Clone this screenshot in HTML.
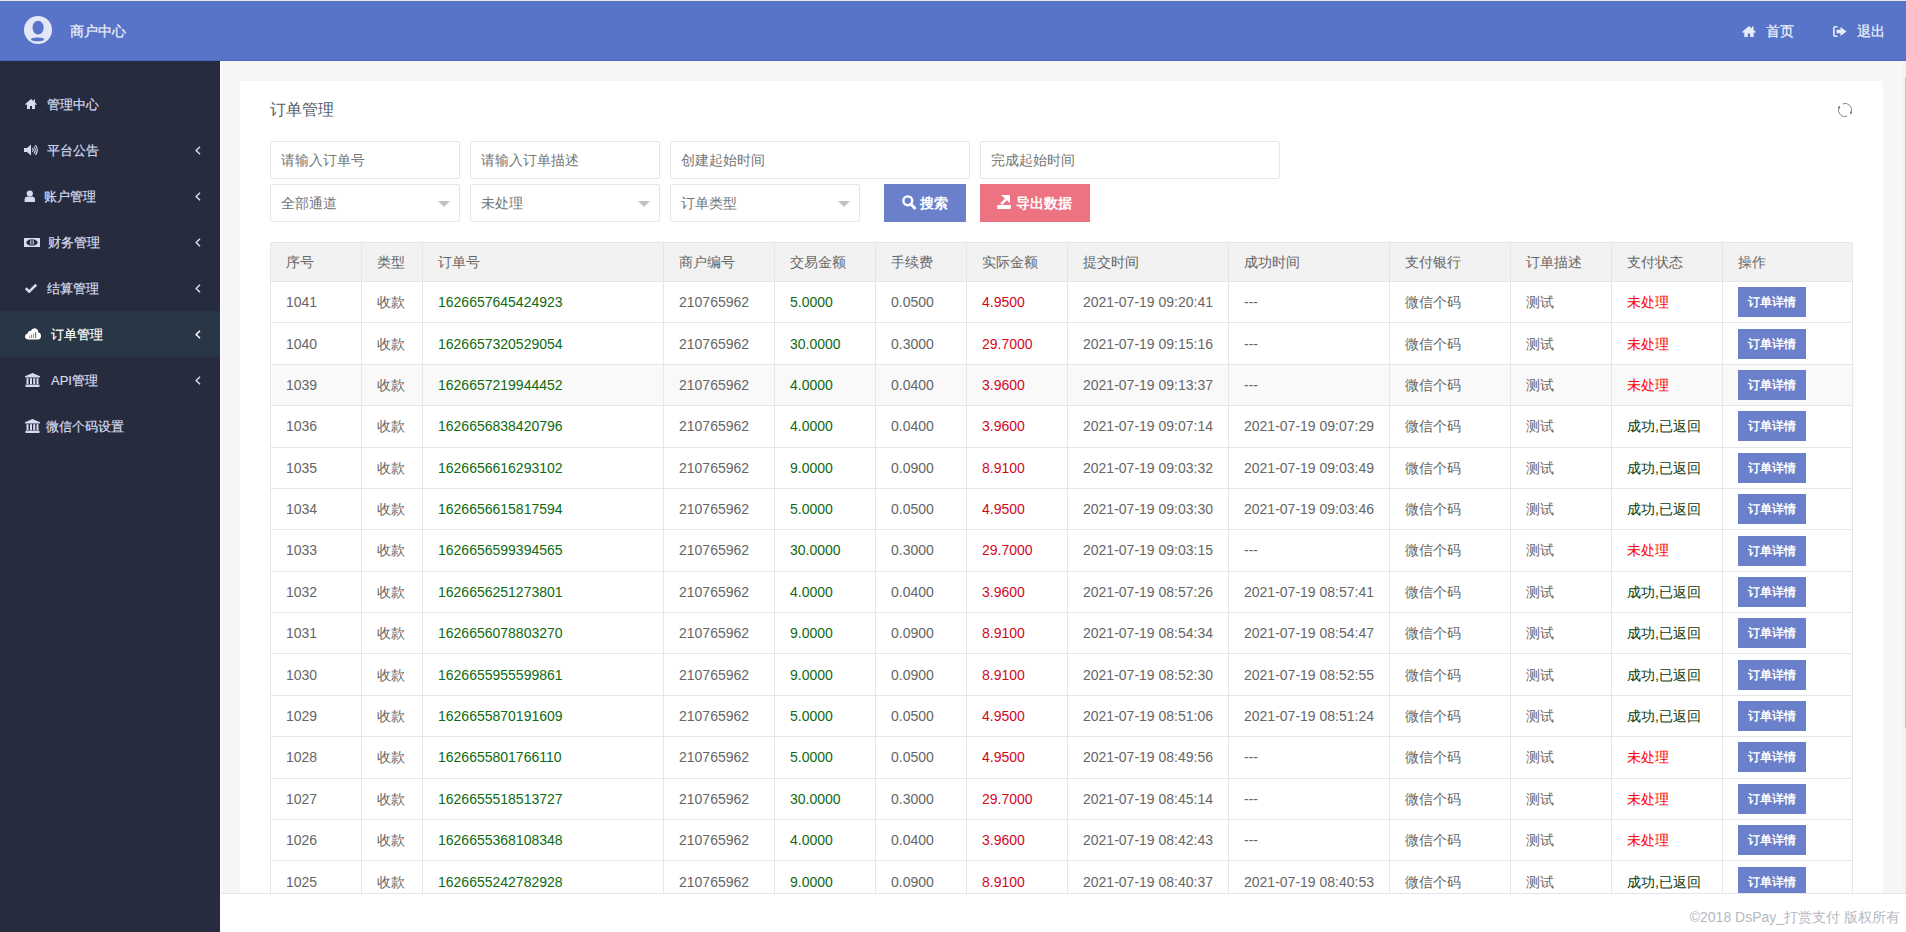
<!DOCTYPE html>
<html><head><meta charset="utf-8">
<style>
*{margin:0;padding:0;box-sizing:border-box}
html,body{width:1906px;height:932px;overflow:hidden;background:#f6f6f6;font-family:"Liberation Sans",sans-serif;font-size:14px;color:#666}
.abs{position:absolute}
#topline{position:absolute;left:0;top:0;width:1906px;height:1px;background:#e9e8e4}
#header{position:absolute;left:0;top:1px;width:1906px;height:60px;background:#5874c8;border-bottom:1px solid #4d68c0}
#side{position:absolute;left:0;top:61px;width:220px;height:871px;background:#262b3e}
#wline{position:absolute;left:220px;top:61px;width:1px;height:871px;background:#fff}
.nav{position:absolute;left:0;width:220px;height:46px;color:#d6dbf0;font-size:13px;-webkit-text-stroke:0.2px #d6dbf0}
.nav.act{background:#283646;color:#fff;-webkit-text-stroke:0.2px #fff}
.nav .t{position:absolute;top:1px;line-height:46px;white-space:nowrap}
.nav svg{position:absolute}
.nav .chev{position:absolute;left:195px;top:19px}
#panel{position:absolute;left:240px;top:81px;width:1643px;height:900px;background:#fff}
.inp{position:absolute;height:38px;border:1px solid #e6e6e6;border-radius:2px;background:#fff;color:#757575;font-size:14px;line-height:36px;padding-left:10px;white-space:nowrap}
.tri{position:absolute;right:9px;top:16px;width:0;height:0;border-left:6px solid transparent;border-right:6px solid transparent;border-top:6px solid #c2c2c2}
.hl{position:absolute;height:1px;background:#e6e6e6}
.vl{position:absolute;width:1px;background:#e6e6e6}
.th{position:absolute;color:#666;font-size:14px;white-space:nowrap}
.td{position:absolute;font-size:14px;white-space:nowrap;color:#666}
.td.gr{color:#0f6a12}
.td.rd{color:#d2081e}
.td.red{color:#ff0000}
.td.dk{color:#0e3a0e}
.btn{position:absolute;width:68px;height:30px;background:#6a80cb;color:#fff;font-size:12px;line-height:30px;text-align:center;font-weight:bold}
#footer{position:absolute;left:221px;top:893px;width:1685px;height:39px;background:#fff;border-top:1px solid #e2e6ea}
#footer .t{position:absolute;right:6px;top:4px;line-height:38px;color:#b4b8c4;font-size:14px}
#sbar{position:absolute;left:1903px;top:61px;width:3px;height:832px;background:#f1f1f1}
#thumb{position:absolute;left:1905px;top:78px;width:1px;height:650px;background:#c1c1c1}
</style></head><body>
<div id="topline"></div>
<div id="header">
  <svg class="abs" style="left:24px;top:15px" width="28" height="28" viewBox="0 0 28 28">
    <circle cx="14" cy="14" r="14" fill="#e4e7f6"/>
    <ellipse cx="14.1" cy="11.6" rx="5.6" ry="6.8" fill="#5874c8"/>
    <ellipse cx="13.6" cy="23.4" rx="6.6" ry="1.9" fill="#5874c8"/>
  </svg>
  <div class="abs" style="left:70px;top:0;line-height:60px;color:#eef0fa;font-size:14px;-webkit-text-stroke:0.25px #eef0fa">商户中心</div>
  <svg class="abs" style="left:1742px;top:25px" width="14" height="11" viewBox="0 0 14 11">
    <path d="M7 0 L0 6 L1.2 7 L2.3 6.1 L2.3 11 L5.8 11 L5.8 7.6 L8.2 7.6 L8.2 11 L11.7 11 L11.7 6.1 L12.8 7 L14 6 L11.5 3.9 L11.5 0.6 L9.9 0.6 L9.9 2.5 Z" fill="#e9ecf8"/>
  </svg>
  <div class="abs" style="left:1766px;top:0;line-height:60px;color:#eef0fa;font-size:14px;-webkit-text-stroke:0.25px #eef0fa">首页</div>
  <svg class="abs" style="left:1833px;top:25px" width="14" height="11" viewBox="0 0 14 11">
    <path d="M4.5 0.8 L2 0.8 Q0.8 0.8 0.8 2 L0.8 9 Q0.8 10.2 2 10.2 L4.5 10.2" stroke="#e9ecf8" stroke-width="1.6" fill="none"/>
    <path d="M3.5 3.8 L7.5 3.8 L7.5 1 L13.5 5.5 L7.5 10 L7.5 7.2 L3.5 7.2 Z" fill="#e9ecf8"/>
  </svg>
  <div class="abs" style="left:1857px;top:0;line-height:60px;color:#eef0fa;font-size:14px;-webkit-text-stroke:0.25px #eef0fa">退出</div>
</div>
<div id="side">
  <div class="nav" style="top:20px">
    <svg style="left:25px;top:18px" width="12" height="10" viewBox="0 0 12 10"><path d="M6 0 L0 5.2 L1 6 L2 5.2 L2 10 L5 10 L5 7 L7 7 L7 10 L10 10 L10 5.2 L11 6 L12 5.2 L10 3.4 L10 0.5 L8.6 0.5 L8.6 2.2 Z" fill="#d6dbf0"/></svg>
    <div class="t" style="left:47px">管理中心</div>
  </div>
  <div class="nav" style="top:66px">
    <svg style="left:24px;top:17px" width="14" height="12" viewBox="0 0 14 12"><path d="M0 4 L3 4 L7 0.5 L7 11.5 L3 8 L0 8 Z" fill="#d6dbf0"/><path d="M8.5 4 Q10 6 8.5 8" stroke="#d6dbf0" stroke-width="1.2" fill="none"/><path d="M10 2.5 Q12.5 6 10 9.5" stroke="#d6dbf0" stroke-width="1.2" fill="none"/><path d="M11.5 1 Q15 6 11.5 11" stroke="#d6dbf0" stroke-width="1.2" fill="none"/></svg>
    <div class="t" style="left:47px">平台公告</div>
    <svg class="chev" width="6" height="9" viewBox="0 0 6 9"><path d="M5 0.8 L1.2 4.5 L5 8.2" stroke="#d6dbf0" stroke-width="1.5" fill="none"/></svg>
  </div>
  <div class="nav" style="top:112px">
    <svg style="left:24px;top:17px" width="12" height="13" viewBox="0 0 12 13"><circle cx="5.8" cy="3.6" r="3.1" fill="#d6dbf0"/><path d="M0.6 12 L0.6 9.6 Q0.6 6.6 3.4 6.4 Q5.8 7.6 8.2 6.4 Q11 6.6 11 9.6 L11 12 Z" fill="#d6dbf0"/></svg>
    <div class="t" style="left:44px">账户管理</div>
    <svg class="chev" width="6" height="9" viewBox="0 0 6 9"><path d="M5 0.8 L1.2 4.5 L5 8.2" stroke="#d6dbf0" stroke-width="1.5" fill="none"/></svg>
  </div>
  <div class="nav" style="top:158px">
    <svg style="left:24px;top:19px" width="16" height="9" viewBox="0 0 16 9"><rect x="0" y="0" width="16" height="9" fill="#d6dbf0"/><ellipse cx="8" cy="4.5" rx="5.6" ry="3.2" fill="#262b3e"/><ellipse cx="8" cy="4.5" rx="2.2" ry="2.9" fill="#9aa0b8"/><rect x="7.5" y="2.2" width="1" height="4.6" fill="#262b3e"/></svg>
    <div class="t" style="left:48px">财务管理</div>
    <svg class="chev" width="6" height="9" viewBox="0 0 6 9"><path d="M5 0.8 L1.2 4.5 L5 8.2" stroke="#d6dbf0" stroke-width="1.5" fill="none"/></svg>
  </div>
  <div class="nav" style="top:204px">
    <svg style="left:25px;top:18px" width="12" height="10" viewBox="0 0 12 10"><path d="M0.8 5.2 L4.2 8.6 L11.2 1.6" stroke="#d6dbf0" stroke-width="2.6" fill="none"/></svg>
    <div class="t" style="left:47px">结算管理</div>
    <svg class="chev" width="6" height="9" viewBox="0 0 6 9"><path d="M5 0.8 L1.2 4.5 L5 8.2" stroke="#d6dbf0" stroke-width="1.5" fill="none"/></svg>
  </div>
  <div class="nav act" style="top:250px">
    <svg style="left:25px;top:17px" width="16" height="12" viewBox="0 0 16 12"><path d="M3.5 11.5 Q0 11.5 0 8.5 Q0 6 2.6 5.6 Q3 2.8 5.8 2.8 Q7 0 10 0.2 Q13.2 0.6 13.2 4.2 Q16 4.8 16 8 Q16 11.5 12.5 11.5 Z" fill="#fff"/><rect x="4" y="7.5" width="1.2" height="2.5" fill="#d9a441"/><rect x="6" y="6.5" width="1.2" height="3.5" fill="#6aa84f"/><rect x="8" y="5.5" width="1.2" height="4.5" fill="#d9a441"/><rect x="10" y="4" width="1.2" height="6" fill="#3d85c6"/></svg>
    <div class="t" style="left:51px">订单管理</div>
    <svg class="chev" width="6" height="9" viewBox="0 0 6 9"><path d="M5 0.8 L1.2 4.5 L5 8.2" stroke="#fff" stroke-width="1.5" fill="none"/></svg>
  </div>
  <div class="nav" style="top:296px">
    <svg style="left:25px;top:16px" width="15" height="14" viewBox="0 0 15 14"><path d="M7.5 0 L15 3.2 L15 4.4 L0 4.4 L0 3.2 Z" fill="#d6dbf0"/><rect x="1.5" y="5.2" width="2" height="6" fill="#d6dbf0"/><rect x="5" y="5.2" width="2" height="6" fill="#d6dbf0"/><rect x="8.2" y="5.2" width="2" height="6" fill="#d6dbf0"/><rect x="11.5" y="5.2" width="2" height="6" fill="#d6dbf0"/><rect x="0.5" y="11.6" width="14" height="2.4" fill="#d6dbf0"/></svg>
    <div class="t" style="left:51px">API管理</div>
    <svg class="chev" width="6" height="9" viewBox="0 0 6 9"><path d="M5 0.8 L1.2 4.5 L5 8.2" stroke="#d6dbf0" stroke-width="1.5" fill="none"/></svg>
  </div>
  <div class="nav" style="top:342px">
    <svg style="left:25px;top:16px" width="15" height="14" viewBox="0 0 15 14"><path d="M7.5 0 L15 3.2 L15 4.4 L0 4.4 L0 3.2 Z" fill="#d6dbf0"/><rect x="1.5" y="5.2" width="2" height="6" fill="#d6dbf0"/><rect x="5" y="5.2" width="2" height="6" fill="#d6dbf0"/><rect x="8.2" y="5.2" width="2" height="6" fill="#d6dbf0"/><rect x="11.5" y="5.2" width="2" height="6" fill="#d6dbf0"/><rect x="0.5" y="11.6" width="14" height="2.4" fill="#d6dbf0"/></svg>
    <div class="t" style="left:46px">微信个码设置</div>
  </div>
</div>
<div id="wline"></div>
<div id="panel"></div>
<div class="abs" style="left:270px;top:96px;line-height:28px;font-size:16px;color:#555a66">订单管理</div>
<svg class="abs" style="left:1837px;top:102px" width="16" height="16" viewBox="0 0 16 16">
  <path d="M5.74 1.8 A6.6 6.6 0 0 1 14.2 10.26" stroke="#7a7e86" stroke-width="0.95" fill="none"/>
  <path d="M10.26 14.2 A6.6 6.6 0 0 1 1.8 5.74" stroke="#7a7e86" stroke-width="0.95" fill="none"/>
  <path d="M15.2 10.2 L12.9 9.4 L13.6 12.4 Z" fill="#666"/>
  <path d="M0.8 5.8 L3.1 6.6 L2.4 3.6 Z" fill="#666"/>
</svg>
<div class="inp" style="left:270px;top:141px;width:190px">请输入订单号</div>
<div class="inp" style="left:470px;top:141px;width:190px">请输入订单描述</div>
<div class="inp" style="left:670px;top:141px;width:300px">创建起始时间</div>
<div class="inp" style="left:980px;top:141px;width:300px">完成起始时间</div>
<div class="inp" style="left:270px;top:184px;width:190px">全部通道<span class="tri"></span></div>
<div class="inp" style="left:470px;top:184px;width:190px">未处理<span class="tri"></span></div>
<div class="inp" style="left:670px;top:184px;width:190px">订单类型<span class="tri"></span></div>
<div class="abs" style="left:884px;top:184px;width:82px;height:38px;background:#6a80cb;color:#fff;font-size:14px;line-height:38px;font-weight:bold">
  <svg class="abs" style="left:18px;top:11px" width="14" height="15" viewBox="0 0 14 15"><circle cx="5.8" cy="5.8" r="4.4" stroke="#fff" stroke-width="2.4" fill="none"/><path d="M8.8 9 L12.6 13" stroke="#fff" stroke-width="3" stroke-linecap="round"/></svg>
  <span class="abs" style="left:36px;top:0">搜索</span>
</div>
<div class="abs" style="left:980px;top:184px;width:110px;height:38px;background:#ee7382;color:#fff;font-size:14px;line-height:38px;font-weight:bold">
  <svg class="abs" style="left:17px;top:11px" width="14" height="14" viewBox="0 0 14 14"><path d="M4 0 L13 0 L13 8 Z" fill="#fff"/><path d="M4.2 9.2 L9.2 4.2" stroke="#fff" stroke-width="2.6" fill="none"/><rect x="0.2" y="10" width="13.6" height="4" rx="0.6" fill="#fff"/></svg>
  <span class="abs" style="left:36px;top:0">导出数据</span>
</div>
<div class="abs" style="left:270px;top:242px;width:1582px;height:39px;background:#f2f2f2"></div>
<div class="abs" style="left:270px;top:364px;width:1582px;height:41px;background:#f9f9f9"></div>
<div class="hl" style="top:242px;left:270px;width:1583px"></div>
<div class="hl" style="top:281px;left:270px;width:1583px"></div>
<div class="hl" style="top:322px;left:270px;width:1583px"></div>
<div class="hl" style="top:364px;left:270px;width:1583px"></div>
<div class="hl" style="top:405px;left:270px;width:1583px"></div>
<div class="hl" style="top:447px;left:270px;width:1583px"></div>
<div class="hl" style="top:488px;left:270px;width:1583px"></div>
<div class="hl" style="top:529px;left:270px;width:1583px"></div>
<div class="hl" style="top:571px;left:270px;width:1583px"></div>
<div class="hl" style="top:612px;left:270px;width:1583px"></div>
<div class="hl" style="top:653px;left:270px;width:1583px"></div>
<div class="hl" style="top:695px;left:270px;width:1583px"></div>
<div class="hl" style="top:736px;left:270px;width:1583px"></div>
<div class="hl" style="top:778px;left:270px;width:1583px"></div>
<div class="hl" style="top:819px;left:270px;width:1583px"></div>
<div class="hl" style="top:860px;left:270px;width:1583px"></div>
<div class="hl" style="top:902px;left:270px;width:1583px"></div>
<div class="vl" style="left:270px;top:242px;height:661px"></div>
<div class="vl" style="left:361px;top:242px;height:661px"></div>
<div class="vl" style="left:422px;top:242px;height:661px"></div>
<div class="vl" style="left:663px;top:242px;height:661px"></div>
<div class="vl" style="left:774px;top:242px;height:661px"></div>
<div class="vl" style="left:875px;top:242px;height:661px"></div>
<div class="vl" style="left:966px;top:242px;height:661px"></div>
<div class="vl" style="left:1067px;top:242px;height:661px"></div>
<div class="vl" style="left:1228px;top:242px;height:661px"></div>
<div class="vl" style="left:1389px;top:242px;height:661px"></div>
<div class="vl" style="left:1510px;top:242px;height:661px"></div>
<div class="vl" style="left:1611px;top:242px;height:661px"></div>
<div class="vl" style="left:1722px;top:242px;height:661px"></div>
<div class="vl" style="left:1852px;top:242px;height:661px"></div>
<div class="th" style="left:286px;top:243px;height:38px;line-height:38px">序号</div>
<div class="th" style="left:377px;top:243px;height:38px;line-height:38px">类型</div>
<div class="th" style="left:438px;top:243px;height:38px;line-height:38px">订单号</div>
<div class="th" style="left:679px;top:243px;height:38px;line-height:38px">商户编号</div>
<div class="th" style="left:790px;top:243px;height:38px;line-height:38px">交易金额</div>
<div class="th" style="left:891px;top:243px;height:38px;line-height:38px">手续费</div>
<div class="th" style="left:982px;top:243px;height:38px;line-height:38px">实际金额</div>
<div class="th" style="left:1083px;top:243px;height:38px;line-height:38px">提交时间</div>
<div class="th" style="left:1244px;top:243px;height:38px;line-height:38px">成功时间</div>
<div class="th" style="left:1405px;top:243px;height:38px;line-height:38px">支付银行</div>
<div class="th" style="left:1526px;top:243px;height:38px;line-height:38px">订单描述</div>
<div class="th" style="left:1627px;top:243px;height:38px;line-height:38px">支付状态</div>
<div class="th" style="left:1738px;top:243px;height:38px;line-height:38px">操作</div>
<div class="td g" style="left:286px;top:282.20px;height:40px;line-height:40px">1041</div>
<div class="td g" style="left:377px;top:282.20px;height:40px;line-height:40px">收款</div>
<div class="td gr" style="left:438px;top:282.20px;height:40px;line-height:40px">1626657645424923</div>
<div class="td g" style="left:679px;top:282.20px;height:40px;line-height:40px">210765962</div>
<div class="td gr" style="left:790px;top:282.20px;height:40px;line-height:40px">5.0000</div>
<div class="td g" style="left:891px;top:282.20px;height:40px;line-height:40px">0.0500</div>
<div class="td rd" style="left:982px;top:282.20px;height:40px;line-height:40px">4.9500</div>
<div class="td g" style="left:1083px;top:282.20px;height:40px;line-height:40px">2021-07-19 09:20:41</div>
<div class="td g" style="left:1244px;top:282.20px;height:40px;line-height:40px">---</div>
<div class="td g" style="left:1405px;top:282.20px;height:40px;line-height:40px">微信个码</div>
<div class="td g" style="left:1526px;top:282.20px;height:40px;line-height:40px">测试</div>
<div class="td red" style="left:1627px;top:282.20px;height:40px;line-height:40px">未处理</div>
<div class="btn" style="left:1738px;top:287px">订单详情</div>
<div class="td g" style="left:286px;top:323.58px;height:40px;line-height:40px">1040</div>
<div class="td g" style="left:377px;top:323.58px;height:40px;line-height:40px">收款</div>
<div class="td gr" style="left:438px;top:323.58px;height:40px;line-height:40px">1626657320529054</div>
<div class="td g" style="left:679px;top:323.58px;height:40px;line-height:40px">210765962</div>
<div class="td gr" style="left:790px;top:323.58px;height:40px;line-height:40px">30.0000</div>
<div class="td g" style="left:891px;top:323.58px;height:40px;line-height:40px">0.3000</div>
<div class="td rd" style="left:982px;top:323.58px;height:40px;line-height:40px">29.7000</div>
<div class="td g" style="left:1083px;top:323.58px;height:40px;line-height:40px">2021-07-19 09:15:16</div>
<div class="td g" style="left:1244px;top:323.58px;height:40px;line-height:40px">---</div>
<div class="td g" style="left:1405px;top:323.58px;height:40px;line-height:40px">微信个码</div>
<div class="td g" style="left:1526px;top:323.58px;height:40px;line-height:40px">测试</div>
<div class="td red" style="left:1627px;top:323.58px;height:40px;line-height:40px">未处理</div>
<div class="btn" style="left:1738px;top:329px">订单详情</div>
<div class="td g" style="left:286px;top:364.96px;height:40px;line-height:40px">1039</div>
<div class="td g" style="left:377px;top:364.96px;height:40px;line-height:40px">收款</div>
<div class="td gr" style="left:438px;top:364.96px;height:40px;line-height:40px">1626657219944452</div>
<div class="td g" style="left:679px;top:364.96px;height:40px;line-height:40px">210765962</div>
<div class="td gr" style="left:790px;top:364.96px;height:40px;line-height:40px">4.0000</div>
<div class="td g" style="left:891px;top:364.96px;height:40px;line-height:40px">0.0400</div>
<div class="td rd" style="left:982px;top:364.96px;height:40px;line-height:40px">3.9600</div>
<div class="td g" style="left:1083px;top:364.96px;height:40px;line-height:40px">2021-07-19 09:13:37</div>
<div class="td g" style="left:1244px;top:364.96px;height:40px;line-height:40px">---</div>
<div class="td g" style="left:1405px;top:364.96px;height:40px;line-height:40px">微信个码</div>
<div class="td g" style="left:1526px;top:364.96px;height:40px;line-height:40px">测试</div>
<div class="td red" style="left:1627px;top:364.96px;height:40px;line-height:40px">未处理</div>
<div class="btn" style="left:1738px;top:370px">订单详情</div>
<div class="td g" style="left:286px;top:406.34px;height:40px;line-height:40px">1036</div>
<div class="td g" style="left:377px;top:406.34px;height:40px;line-height:40px">收款</div>
<div class="td gr" style="left:438px;top:406.34px;height:40px;line-height:40px">1626656838420796</div>
<div class="td g" style="left:679px;top:406.34px;height:40px;line-height:40px">210765962</div>
<div class="td gr" style="left:790px;top:406.34px;height:40px;line-height:40px">4.0000</div>
<div class="td g" style="left:891px;top:406.34px;height:40px;line-height:40px">0.0400</div>
<div class="td rd" style="left:982px;top:406.34px;height:40px;line-height:40px">3.9600</div>
<div class="td g" style="left:1083px;top:406.34px;height:40px;line-height:40px">2021-07-19 09:07:14</div>
<div class="td g" style="left:1244px;top:406.34px;height:40px;line-height:40px">2021-07-19 09:07:29</div>
<div class="td g" style="left:1405px;top:406.34px;height:40px;line-height:40px">微信个码</div>
<div class="td g" style="left:1526px;top:406.34px;height:40px;line-height:40px">测试</div>
<div class="td dk" style="left:1627px;top:406.34px;height:40px;line-height:40px">成功,已返回</div>
<div class="btn" style="left:1738px;top:411px">订单详情</div>
<div class="td g" style="left:286px;top:447.72px;height:40px;line-height:40px">1035</div>
<div class="td g" style="left:377px;top:447.72px;height:40px;line-height:40px">收款</div>
<div class="td gr" style="left:438px;top:447.72px;height:40px;line-height:40px">1626656616293102</div>
<div class="td g" style="left:679px;top:447.72px;height:40px;line-height:40px">210765962</div>
<div class="td gr" style="left:790px;top:447.72px;height:40px;line-height:40px">9.0000</div>
<div class="td g" style="left:891px;top:447.72px;height:40px;line-height:40px">0.0900</div>
<div class="td rd" style="left:982px;top:447.72px;height:40px;line-height:40px">8.9100</div>
<div class="td g" style="left:1083px;top:447.72px;height:40px;line-height:40px">2021-07-19 09:03:32</div>
<div class="td g" style="left:1244px;top:447.72px;height:40px;line-height:40px">2021-07-19 09:03:49</div>
<div class="td g" style="left:1405px;top:447.72px;height:40px;line-height:40px">微信个码</div>
<div class="td g" style="left:1526px;top:447.72px;height:40px;line-height:40px">测试</div>
<div class="td dk" style="left:1627px;top:447.72px;height:40px;line-height:40px">成功,已返回</div>
<div class="btn" style="left:1738px;top:453px">订单详情</div>
<div class="td g" style="left:286px;top:489.10px;height:40px;line-height:40px">1034</div>
<div class="td g" style="left:377px;top:489.10px;height:40px;line-height:40px">收款</div>
<div class="td gr" style="left:438px;top:489.10px;height:40px;line-height:40px">1626656615817594</div>
<div class="td g" style="left:679px;top:489.10px;height:40px;line-height:40px">210765962</div>
<div class="td gr" style="left:790px;top:489.10px;height:40px;line-height:40px">5.0000</div>
<div class="td g" style="left:891px;top:489.10px;height:40px;line-height:40px">0.0500</div>
<div class="td rd" style="left:982px;top:489.10px;height:40px;line-height:40px">4.9500</div>
<div class="td g" style="left:1083px;top:489.10px;height:40px;line-height:40px">2021-07-19 09:03:30</div>
<div class="td g" style="left:1244px;top:489.10px;height:40px;line-height:40px">2021-07-19 09:03:46</div>
<div class="td g" style="left:1405px;top:489.10px;height:40px;line-height:40px">微信个码</div>
<div class="td g" style="left:1526px;top:489.10px;height:40px;line-height:40px">测试</div>
<div class="td dk" style="left:1627px;top:489.10px;height:40px;line-height:40px">成功,已返回</div>
<div class="btn" style="left:1738px;top:494px">订单详情</div>
<div class="td g" style="left:286px;top:530.48px;height:40px;line-height:40px">1033</div>
<div class="td g" style="left:377px;top:530.48px;height:40px;line-height:40px">收款</div>
<div class="td gr" style="left:438px;top:530.48px;height:40px;line-height:40px">1626656599394565</div>
<div class="td g" style="left:679px;top:530.48px;height:40px;line-height:40px">210765962</div>
<div class="td gr" style="left:790px;top:530.48px;height:40px;line-height:40px">30.0000</div>
<div class="td g" style="left:891px;top:530.48px;height:40px;line-height:40px">0.3000</div>
<div class="td rd" style="left:982px;top:530.48px;height:40px;line-height:40px">29.7000</div>
<div class="td g" style="left:1083px;top:530.48px;height:40px;line-height:40px">2021-07-19 09:03:15</div>
<div class="td g" style="left:1244px;top:530.48px;height:40px;line-height:40px">---</div>
<div class="td g" style="left:1405px;top:530.48px;height:40px;line-height:40px">微信个码</div>
<div class="td g" style="left:1526px;top:530.48px;height:40px;line-height:40px">测试</div>
<div class="td red" style="left:1627px;top:530.48px;height:40px;line-height:40px">未处理</div>
<div class="btn" style="left:1738px;top:536px">订单详情</div>
<div class="td g" style="left:286px;top:571.86px;height:40px;line-height:40px">1032</div>
<div class="td g" style="left:377px;top:571.86px;height:40px;line-height:40px">收款</div>
<div class="td gr" style="left:438px;top:571.86px;height:40px;line-height:40px">1626656251273801</div>
<div class="td g" style="left:679px;top:571.86px;height:40px;line-height:40px">210765962</div>
<div class="td gr" style="left:790px;top:571.86px;height:40px;line-height:40px">4.0000</div>
<div class="td g" style="left:891px;top:571.86px;height:40px;line-height:40px">0.0400</div>
<div class="td rd" style="left:982px;top:571.86px;height:40px;line-height:40px">3.9600</div>
<div class="td g" style="left:1083px;top:571.86px;height:40px;line-height:40px">2021-07-19 08:57:26</div>
<div class="td g" style="left:1244px;top:571.86px;height:40px;line-height:40px">2021-07-19 08:57:41</div>
<div class="td g" style="left:1405px;top:571.86px;height:40px;line-height:40px">微信个码</div>
<div class="td g" style="left:1526px;top:571.86px;height:40px;line-height:40px">测试</div>
<div class="td dk" style="left:1627px;top:571.86px;height:40px;line-height:40px">成功,已返回</div>
<div class="btn" style="left:1738px;top:577px">订单详情</div>
<div class="td g" style="left:286px;top:613.24px;height:40px;line-height:40px">1031</div>
<div class="td g" style="left:377px;top:613.24px;height:40px;line-height:40px">收款</div>
<div class="td gr" style="left:438px;top:613.24px;height:40px;line-height:40px">1626656078803270</div>
<div class="td g" style="left:679px;top:613.24px;height:40px;line-height:40px">210765962</div>
<div class="td gr" style="left:790px;top:613.24px;height:40px;line-height:40px">9.0000</div>
<div class="td g" style="left:891px;top:613.24px;height:40px;line-height:40px">0.0900</div>
<div class="td rd" style="left:982px;top:613.24px;height:40px;line-height:40px">8.9100</div>
<div class="td g" style="left:1083px;top:613.24px;height:40px;line-height:40px">2021-07-19 08:54:34</div>
<div class="td g" style="left:1244px;top:613.24px;height:40px;line-height:40px">2021-07-19 08:54:47</div>
<div class="td g" style="left:1405px;top:613.24px;height:40px;line-height:40px">微信个码</div>
<div class="td g" style="left:1526px;top:613.24px;height:40px;line-height:40px">测试</div>
<div class="td dk" style="left:1627px;top:613.24px;height:40px;line-height:40px">成功,已返回</div>
<div class="btn" style="left:1738px;top:618px">订单详情</div>
<div class="td g" style="left:286px;top:654.62px;height:40px;line-height:40px">1030</div>
<div class="td g" style="left:377px;top:654.62px;height:40px;line-height:40px">收款</div>
<div class="td gr" style="left:438px;top:654.62px;height:40px;line-height:40px">1626655955599861</div>
<div class="td g" style="left:679px;top:654.62px;height:40px;line-height:40px">210765962</div>
<div class="td gr" style="left:790px;top:654.62px;height:40px;line-height:40px">9.0000</div>
<div class="td g" style="left:891px;top:654.62px;height:40px;line-height:40px">0.0900</div>
<div class="td rd" style="left:982px;top:654.62px;height:40px;line-height:40px">8.9100</div>
<div class="td g" style="left:1083px;top:654.62px;height:40px;line-height:40px">2021-07-19 08:52:30</div>
<div class="td g" style="left:1244px;top:654.62px;height:40px;line-height:40px">2021-07-19 08:52:55</div>
<div class="td g" style="left:1405px;top:654.62px;height:40px;line-height:40px">微信个码</div>
<div class="td g" style="left:1526px;top:654.62px;height:40px;line-height:40px">测试</div>
<div class="td dk" style="left:1627px;top:654.62px;height:40px;line-height:40px">成功,已返回</div>
<div class="btn" style="left:1738px;top:660px">订单详情</div>
<div class="td g" style="left:286px;top:696.00px;height:40px;line-height:40px">1029</div>
<div class="td g" style="left:377px;top:696.00px;height:40px;line-height:40px">收款</div>
<div class="td gr" style="left:438px;top:696.00px;height:40px;line-height:40px">1626655870191609</div>
<div class="td g" style="left:679px;top:696.00px;height:40px;line-height:40px">210765962</div>
<div class="td gr" style="left:790px;top:696.00px;height:40px;line-height:40px">5.0000</div>
<div class="td g" style="left:891px;top:696.00px;height:40px;line-height:40px">0.0500</div>
<div class="td rd" style="left:982px;top:696.00px;height:40px;line-height:40px">4.9500</div>
<div class="td g" style="left:1083px;top:696.00px;height:40px;line-height:40px">2021-07-19 08:51:06</div>
<div class="td g" style="left:1244px;top:696.00px;height:40px;line-height:40px">2021-07-19 08:51:24</div>
<div class="td g" style="left:1405px;top:696.00px;height:40px;line-height:40px">微信个码</div>
<div class="td g" style="left:1526px;top:696.00px;height:40px;line-height:40px">测试</div>
<div class="td dk" style="left:1627px;top:696.00px;height:40px;line-height:40px">成功,已返回</div>
<div class="btn" style="left:1738px;top:701px">订单详情</div>
<div class="td g" style="left:286px;top:737.38px;height:40px;line-height:40px">1028</div>
<div class="td g" style="left:377px;top:737.38px;height:40px;line-height:40px">收款</div>
<div class="td gr" style="left:438px;top:737.38px;height:40px;line-height:40px">1626655801766110</div>
<div class="td g" style="left:679px;top:737.38px;height:40px;line-height:40px">210765962</div>
<div class="td gr" style="left:790px;top:737.38px;height:40px;line-height:40px">5.0000</div>
<div class="td g" style="left:891px;top:737.38px;height:40px;line-height:40px">0.0500</div>
<div class="td rd" style="left:982px;top:737.38px;height:40px;line-height:40px">4.9500</div>
<div class="td g" style="left:1083px;top:737.38px;height:40px;line-height:40px">2021-07-19 08:49:56</div>
<div class="td g" style="left:1244px;top:737.38px;height:40px;line-height:40px">---</div>
<div class="td g" style="left:1405px;top:737.38px;height:40px;line-height:40px">微信个码</div>
<div class="td g" style="left:1526px;top:737.38px;height:40px;line-height:40px">测试</div>
<div class="td red" style="left:1627px;top:737.38px;height:40px;line-height:40px">未处理</div>
<div class="btn" style="left:1738px;top:742px">订单详情</div>
<div class="td g" style="left:286px;top:778.76px;height:40px;line-height:40px">1027</div>
<div class="td g" style="left:377px;top:778.76px;height:40px;line-height:40px">收款</div>
<div class="td gr" style="left:438px;top:778.76px;height:40px;line-height:40px">1626655518513727</div>
<div class="td g" style="left:679px;top:778.76px;height:40px;line-height:40px">210765962</div>
<div class="td gr" style="left:790px;top:778.76px;height:40px;line-height:40px">30.0000</div>
<div class="td g" style="left:891px;top:778.76px;height:40px;line-height:40px">0.3000</div>
<div class="td rd" style="left:982px;top:778.76px;height:40px;line-height:40px">29.7000</div>
<div class="td g" style="left:1083px;top:778.76px;height:40px;line-height:40px">2021-07-19 08:45:14</div>
<div class="td g" style="left:1244px;top:778.76px;height:40px;line-height:40px">---</div>
<div class="td g" style="left:1405px;top:778.76px;height:40px;line-height:40px">微信个码</div>
<div class="td g" style="left:1526px;top:778.76px;height:40px;line-height:40px">测试</div>
<div class="td red" style="left:1627px;top:778.76px;height:40px;line-height:40px">未处理</div>
<div class="btn" style="left:1738px;top:784px">订单详情</div>
<div class="td g" style="left:286px;top:820.14px;height:40px;line-height:40px">1026</div>
<div class="td g" style="left:377px;top:820.14px;height:40px;line-height:40px">收款</div>
<div class="td gr" style="left:438px;top:820.14px;height:40px;line-height:40px">1626655368108348</div>
<div class="td g" style="left:679px;top:820.14px;height:40px;line-height:40px">210765962</div>
<div class="td gr" style="left:790px;top:820.14px;height:40px;line-height:40px">4.0000</div>
<div class="td g" style="left:891px;top:820.14px;height:40px;line-height:40px">0.0400</div>
<div class="td rd" style="left:982px;top:820.14px;height:40px;line-height:40px">3.9600</div>
<div class="td g" style="left:1083px;top:820.14px;height:40px;line-height:40px">2021-07-19 08:42:43</div>
<div class="td g" style="left:1244px;top:820.14px;height:40px;line-height:40px">---</div>
<div class="td g" style="left:1405px;top:820.14px;height:40px;line-height:40px">微信个码</div>
<div class="td g" style="left:1526px;top:820.14px;height:40px;line-height:40px">测试</div>
<div class="td red" style="left:1627px;top:820.14px;height:40px;line-height:40px">未处理</div>
<div class="btn" style="left:1738px;top:825px">订单详情</div>
<div class="td g" style="left:286px;top:861.52px;height:40px;line-height:40px">1025</div>
<div class="td g" style="left:377px;top:861.52px;height:40px;line-height:40px">收款</div>
<div class="td gr" style="left:438px;top:861.52px;height:40px;line-height:40px">1626655242782928</div>
<div class="td g" style="left:679px;top:861.52px;height:40px;line-height:40px">210765962</div>
<div class="td gr" style="left:790px;top:861.52px;height:40px;line-height:40px">9.0000</div>
<div class="td g" style="left:891px;top:861.52px;height:40px;line-height:40px">0.0900</div>
<div class="td rd" style="left:982px;top:861.52px;height:40px;line-height:40px">8.9100</div>
<div class="td g" style="left:1083px;top:861.52px;height:40px;line-height:40px">2021-07-19 08:40:37</div>
<div class="td g" style="left:1244px;top:861.52px;height:40px;line-height:40px">2021-07-19 08:40:53</div>
<div class="td g" style="left:1405px;top:861.52px;height:40px;line-height:40px">微信个码</div>
<div class="td g" style="left:1526px;top:861.52px;height:40px;line-height:40px">测试</div>
<div class="td dk" style="left:1627px;top:861.52px;height:40px;line-height:40px">成功,已返回</div>
<div class="btn" style="left:1738px;top:867px">订单详情</div>
<div id="sbar"></div><div id="thumb"></div>
<div id="footer"><div class="t">©2018 DsPay_打赏支付 版权所有</div></div>
</body></html>
